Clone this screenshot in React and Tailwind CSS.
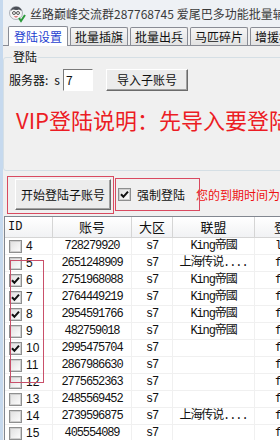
const rows = [
  { id: 4, acc: '728279920', ally: 'King帝國', last: 'l', c: false },
  { id: 5, acc: '2651248909', ally: '上海传说....', last: 'f', c: false },
  { id: 6, acc: '2751968088', ally: 'King帝國', last: 'f', c: true },
  { id: 7, acc: '2764449219', ally: 'King帝國', last: 'f', c: true },
  { id: 8, acc: '2954591766', ally: 'King帝國', last: 'f', c: true },
  { id: 9, acc: '482759018', ally: 'King帝國', last: 'f', c: false },
  { id: 10, acc: '2995475704', ally: '', last: 'f', c: true },
  { id: 11, acc: '2867986630', ally: '', last: 'f', c: false },
  { id: 12, acc: '2775652363', ally: '', last: 'f', c: false },
  { id: 13, acc: '2485569452', ally: '', last: 'f', c: false },
  { id: 14, acc: '2739596875', ally: '上海传说....', last: 'f', c: false },
  { id: 15, acc: '405554089', ally: '', last: 'f', c: false },
];

function Check({ checked }) {
  return (
    <span className="w-[13px] h-[13px] border border-[#8e8f8f] bg-white flex items-center justify-center shrink-0">
      <span className="w-[11px] h-[11px] border border-[#cfcfcf] bg-gradient-to-br from-[#e2e2e2] to-[#fbfbfb] flex items-center justify-center">
        {checked && (
          <svg width="9" height="9" viewBox="0 0 9 9">
            <path d="M1 4.2 L3.4 6.8 L8 1.6" stroke="#111" strokeWidth="2" fill="none" />
          </svg>
        )}
      </span>
    </span>
  );
}

function Tab({ label, active }) {
  if (active) {
    return (
      <div className="h-[20px] px-[5px] flex items-center bg-white border border-b-0 border-[#898c95] text-[#1f3fd0] text-[12px] leading-none rounded-t-[2px] relative z-10 -mb-[1px]">
        {label}
      </div>
    );
  }
  return (
    <div className="h-[18px] px-[4px] flex items-center bg-gradient-to-b from-[#f5f5f5] to-[#e2e2e2] border border-b-0 border-[#898c95] text-[#111] text-[12px] leading-none rounded-t-[2px]">
      {label}
    </div>
  );
}

export default function App() {
  return (
    <div className="w-[280px] h-[440px] overflow-hidden bg-[#f0f0f0] flex flex-col relative font-['Noto_Sans_CJK_SC','Liberation_Sans',sans-serif] border-l-[3px] border-[#c6d9ee]">
      {/* title bar */}
      <div className="h-[27px] shrink-0 flex items-center pl-[4px] bg-[#eef1f5] -ml-[3px]">
        <svg width="18" height="18" viewBox="0 0 18 18" className="ml-[4px] shrink-0">
          <ellipse cx="8" cy="8" rx="6.5" ry="6.5" fill="#f4f4f4" stroke="#9aa0a8" strokeWidth="0.8" />
          <path d="M2.5 6 Q4 1.5 8.5 1.8 Q13 2 13.8 6 L11 4.5 Q8 5.5 5 4.6 Z" fill="#4b4f57" />
          <circle cx="6" cy="8" r="1.5" fill="none" stroke="#333" strokeWidth="0.8" />
          <circle cx="10" cy="8" r="1.5" fill="none" stroke="#333" strokeWidth="0.8" />
          <path d="M6.5 11.5 Q8 12.5 9.5 11.5" stroke="#c33" strokeWidth="0.9" fill="none" />
          <path d="M11 13 L13 16 L17 10" stroke="#2c9a3a" strokeWidth="2" fill="none" />
        </svg>
        <span className="ml-[4px] text-[12px] leading-none text-[#3a3a3a] whitespace-nowrap">丝路巅峰交流群287768745 爱尾巴多功能批量辅助</span>
      </div>

      {/* tabs */}
      <div className="h-[19px] shrink-0 flex items-end pl-[5px] gap-[2px] border-b border-[#898c95] whitespace-nowrap">
        <Tab label="登陆设置" active />
        <Tab label="批量插旗" />
        <Tab label="批量出兵" />
        <Tab label="马匹碎片" />
        <Tab label="增援相关" />
      </div>

      {/* panel */}
      <div className="shrink-0 h-[170px] flex flex-col pt-[5px]">
        <fieldset className="border border-[#d5dfe5] rounded-[3px] mr-[-40px] h-[120px] px-[5px]">
          <legend className="text-[12px] leading-none px-[1px] ml-[3px] text-[#111]">登陆</legend>
          <div className="flex items-center h-[22px] mt-[6px] text-[12px] text-[#111]">
            <span className="leading-none">服务器:</span>
            <span className="ml-[6px] leading-none">s</span>
            <div className="ml-[3px] w-[30px] h-[22px] bg-white border-t border-l border-[#7a7a7a] border-b border-r border-b-white border-r-white flex items-center pl-[2px] text-[12px] leading-none">7</div>
            <button className="ml-[13px] w-[82px] h-[22px] bg-[#ececec] border border-t-white border-l-white border-b-[#6b6b6b] border-r-[#6b6b6b] shadow-[inset_-1px_-1px_0_#a0a0a0] text-[12px] leading-none text-[#111]">导入子账号</button>
          </div>
          <div className="mt-[17px] ml-[7px] text-[22px] leading-none text-[#ec1c24] whitespace-nowrap">VIP登陆说明：先导入要登陆子账号</div>
        </fieldset>
        <div className="flex items-center mt-[8px] pl-[12px] whitespace-nowrap">
          <button className="w-[97px] h-[31px] bg-[#ececec] border border-t-white border-l-white border-b-[#6b6b6b] border-r-[#6b6b6b] shadow-[inset_-1px_-1px_0_#a0a0a0] text-[12px] leading-none text-[#111]">开始登陆子账号</button>
          <div className="ml-[7px] flex items-center gap-[6px]">
            <Check checked />
            <span className="text-[12px] leading-none text-[#111]">强制登陆</span>
          </div>
          <span className="ml-[11px] text-[12px] leading-none text-[#ee1111]">您的到期时间为</span>
        </div>
      </div>

      {/* table */}
      <div className="flex-1 ml-[1px] border-t border-l border-[#828790] bg-white font-['Liberation_Mono','Noto_Sans_CJK_SC',monospace] text-[12px] tracking-[-1.1px] text-[#111] overflow-hidden">
        <div className="flex h-[21px] bg-gradient-to-b from-white to-[#f1f2f4] border-b border-[#d5d5d5] whitespace-nowrap tracking-normal">
          <div className="w-[48px] shrink-0 flex items-center pl-[3px] border-r border-[#d5d5d5] text-[12px]">ID</div>
          <div className="w-[79px] shrink-0 flex items-center justify-center border-r border-[#d5d5d5] text-[13px] font-['Noto_Sans_CJK_SC',sans-serif]">账号</div>
          <div className="w-[41px] shrink-0 flex items-center justify-center border-r border-[#d5d5d5] text-[13px] font-['Noto_Sans_CJK_SC',sans-serif]">大区</div>
          <div className="w-[82px] shrink-0 flex items-center justify-center border-r border-[#d5d5d5] text-[13px] font-['Noto_Sans_CJK_SC',sans-serif]">联盟</div>
          <div className="w-[80px] shrink-0 flex items-center pl-[19px] text-[13px] font-['Noto_Sans_CJK_SC',sans-serif]">登录状态</div>
        </div>
        {rows.map((r) => (
          <div key={r.id} className="flex h-[17px] border-b border-[#f0f0f0] whitespace-nowrap">
            <div className="w-[48px] shrink-0 flex items-center pl-[4px] gap-[4px] border-r border-[#f0f0f0] tracking-normal">
              <Check checked={r.c} />
              <span className="text-[12px] leading-none font-['Liberation_Sans',sans-serif]">{r.id}</span>
            </div>
            <div className="w-[79px] shrink-0 flex items-center justify-center border-r border-[#f0f0f0]">{r.acc}</div>
            <div className="w-[41px] shrink-0 flex items-center justify-center border-r border-[#f0f0f0]">s7</div>
            <div className="w-[82px] shrink-0 flex items-center justify-center border-r border-[#f0f0f0]">{r.ally}</div>
            <div className="w-[80px] shrink-0 flex items-center pl-[20px]">{r.last}</div>
          </div>
        ))}
      </div>

      {/* red annotation boxes */}
      <div className="absolute left-[4px] top-[176px] w-[107px] h-[38px] border border-[#d94a60]" />
      <div className="absolute left-[112px] top-[178px] w-[85px] h-[33px] border border-[#d94a60]" />
      <div className="absolute left-[7px] top-[260px] w-[34px] h-[123px] border border-[#c9506a]" />
    </div>
  );
}
